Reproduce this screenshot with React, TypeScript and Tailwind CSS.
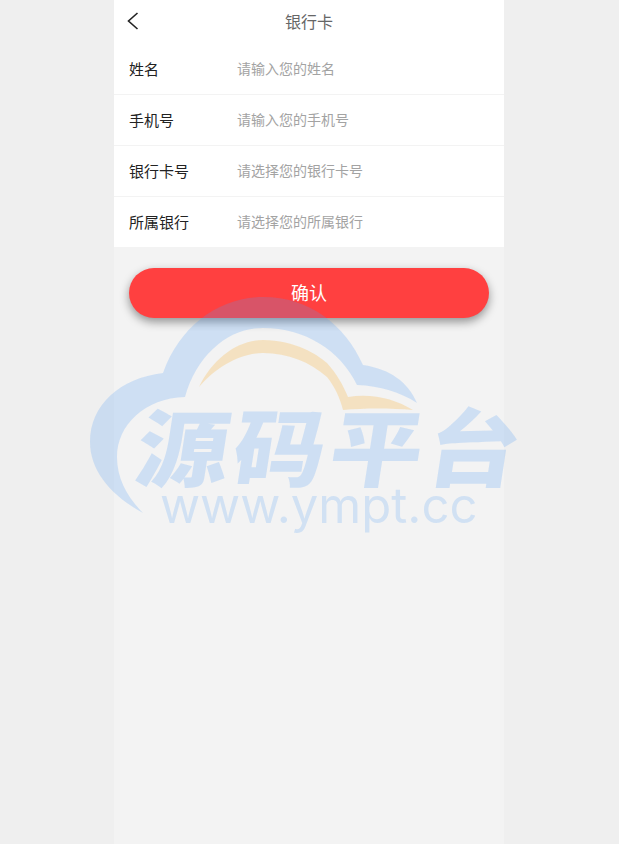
const rows = [
  { label: '姓名', hint: '请输入您的姓名' },
  { label: '手机号', hint: '请输入您的手机号' },
  { label: '银行卡号', hint: '请选择您的银行卡号' },
  { label: '所属银行', hint: '请选择您的所属银行' },
]

const cjk = "font-['Liberation_Sans','Noto_Sans_CJK_SC',sans-serif]"

function Watermark() {
  return (
    <div className="absolute inset-0 pointer-events-none overflow-hidden">
      <svg className="absolute left-0 top-0" width="619" height="844" viewBox="0 0 619 844">
        <path
          d="M143 513C110 495 90 470 90 442C90 405 120 378 163 373C180 325 220 297 263 297C310 297 345 325 363 365C390 369 408 382 417 403C400 392 380 386 357 385C340 350 305 328 263 328C228 328 197 355 185 397C145 398 117 425 117 457C117 478 127 497 143 513Z"
          fill="#4d9bf7"
          fillOpacity="0.22"
        />
        <path
          d="M199 387C213 358 238 340 263 340C295 340 318 355 327 363C337 374 343 385 348 397C372 393 395 399 413 410C390 408 365 408 343 410C340 398 335 387 327 377C310 362 288 353 263 353C240 353 216 367 199 387Z"
          fill="#f8b84e"
          fillOpacity="0.3"
        />
      </svg>
      <div className={`absolute left-[137px] top-[411px] origin-left -skew-x-[8deg] scale-x-[1.1] whitespace-nowrap text-[84px] leading-[80px] tracking-[4px] font-black text-[#4d9bf7]/[0.22] ${cjk}`}>
        源码平台
      </div>
      <div className="absolute left-[160px] top-[491px] whitespace-nowrap font-['Inter',sans-serif] text-[49px] leading-[30px] font-normal text-[#4d9bf7]/[0.2]">
        www.ympt.cc
      </div>
    </div>
  )
}

export default function App() {
  return (
    <div className={`relative min-h-screen bg-[#efefef] ${cjk}`}>
      <div className="ml-[114px] min-h-screen w-[390px] bg-[#f3f3f3]">
        <div className="bg-white">
          <div className="relative flex h-[44px] items-center justify-center pt-[2px]">
            <svg className="absolute left-[13px] top-[12px]" width="13" height="18" viewBox="0 0 13 18" fill="none">
              <path d="M10.5 1L1.5 9L10.5 17" stroke="#222222" strokeWidth="1.6" />
            </svg>
            <span className="text-[16px] text-[#666666]">银行卡</span>
          </div>
          {rows.map((row, i) => (
            <div
              key={row.label}
              className={`flex items-center px-[15px] ${i < rows.length - 1 ? 'h-[51px] border-b border-[#f3f3f3]' : 'h-[50px]'}`}
            >
              <span className="w-[108px] pt-[2px] text-[15px] text-[#222222]">{row.label}</span>
              <span className="text-[14px] text-[#a3a3a3]">{row.hint}</span>
            </div>
          ))}
        </div>
        <div className="px-[15px] pt-[21px]">
          <button className="flex h-[50px] w-full items-center justify-center rounded-[25px] bg-[#ff4040] pt-[2px] text-[18px] text-white shadow-[0_4px_10px_rgba(0,0,0,0.4)]">
            确认
          </button>
        </div>
      </div>
      <Watermark />
    </div>
  )
}
